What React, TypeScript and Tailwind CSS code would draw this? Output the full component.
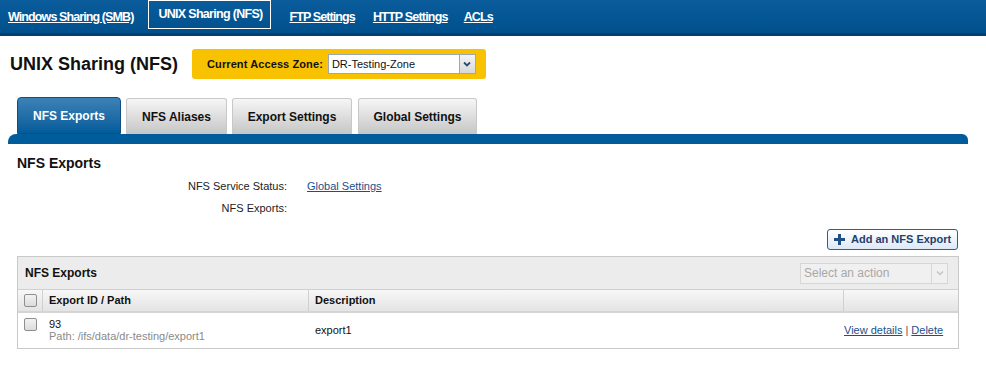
import React from "react";

const font = { fontFamily: '"Liberation Sans", Arial, sans-serif' };

function Checkbox() {
  return (
    <div className="w-[13px] h-[13px] border border-[#8f8f8f] bg-gradient-to-b from-[#f2f2f2] to-[#dcdcdc] rounded-[2px]" />
  );
}

export default function App() {
  return (
    <div style={font} className="w-[986px] h-[374px] bg-white text-[#000] overflow-hidden">
      {/* Top nav */}
      <div className="h-[36px] bg-gradient-to-b from-[#0b5c9c] to-[#00508c] border-b-[3px] border-[#003f70] flex items-start pl-[8px]">
        <a className="mt-[8px] text-white text-[12.5px] font-bold underline tracking-[-0.9px]">Windows Sharing (SMB)</a>
        <div className="ml-[15px] h-[29px] border border-white pl-[9px] pr-[7px] flex items-center">
          <span className="text-white text-[12.5px] font-bold tracking-[-0.7px]">UNIX Sharing (NFS)</span>
        </div>
        <a className="ml-[19px] mt-[8px] text-white text-[12.5px] font-bold underline tracking-[-0.9px]">FTP Settings</a>
        <a className="ml-[18px] mt-[8px] text-white text-[12.5px] font-bold underline tracking-[-0.8px]">HTTP Settings</a>
        <a className="ml-[16px] mt-[8px] text-white text-[12.5px] font-bold underline tracking-[-0.9px]">ACLs</a>
      </div>

      {/* Title row */}
      <div className="flex items-center mt-[13px] pl-[10px]">
        <h1 className="text-[18px] font-bold text-[#111] leading-none">UNIX Sharing (NFS)</h1>
        <div className="ml-[14px] w-[294px] h-[30px] bg-[#f8c200] rounded-[3px] flex items-center pl-[15px]">
          <span className="text-[11px] font-bold text-[#111] tracking-[0.1px]">Current Access Zone:</span>
          <div className="ml-[5px] w-[148px] h-[20px] bg-white border border-[#9aa7b5] flex items-center">
            <span className="flex-1 pl-[3px] text-[11px] text-[#111]">DR-Testing-Zone</span>
            <div className="w-[16px] h-full border-l border-[#9aa7b5] bg-gradient-to-b from-[#f4f4f4] to-[#d8d8d8] flex items-center justify-center">
              <svg width="8" height="6" viewBox="0 0 8 6"><path d="M1 1.5 L4 4.5 L7 1.5" stroke="#2a4a7a" strokeWidth="1.8" fill="none" /></svg>
            </div>
          </div>
        </div>
      </div>

      {/* Tabs */}
      <div className="mt-[18px] pl-[17px] flex items-end h-[37px]">
        <div className="w-[104px] h-[37px] rounded-t-[4px] border border-[#0d4f85] bg-gradient-to-b from-[#3b82b6] to-[#005c9a] flex items-center justify-center">
          <span className="text-white text-[12px] font-bold">NFS Exports</span>
        </div>
        <div className="ml-[5px] w-[101px] h-[36px] rounded-t-[3px] border border-[#c8c8c8] border-b-0 bg-gradient-to-b from-[#f6f6f6] to-[#c6c6c6] flex items-center justify-center">
          <span className="text-[#111] text-[12px] font-bold">NFS Aliases</span>
        </div>
        <div className="ml-[5px] w-[120px] h-[36px] rounded-t-[3px] border border-[#c8c8c8] border-b-0 bg-gradient-to-b from-[#f6f6f6] to-[#c6c6c6] flex items-center justify-center">
          <span className="text-[#111] text-[12px] font-bold">Export Settings</span>
        </div>
        <div className="ml-[6px] w-[119px] h-[36px] rounded-t-[3px] border border-[#c8c8c8] border-b-0 bg-gradient-to-b from-[#f6f6f6] to-[#c6c6c6] flex items-center justify-center">
          <span className="text-[#111] text-[12px] font-bold">Global Settings</span>
        </div>
      </div>
      <div className="ml-[8px] w-[960px] h-[10px] bg-[#005c9a] rounded-tl-[8px] rounded-tr-[6px]" />

      {/* Section */}
      <div className="pl-[17px] mt-[10px]">
        <h2 className="text-[14px] font-bold text-[#111] leading-[18px]">NFS Exports</h2>
        <div className="mt-[7px] grid grid-cols-[270px_1fr] gap-x-[20px] gap-y-[8px] text-[11px] text-[#222] leading-[14px]">
          <span className="text-right">NFS Service Status:</span>
          <a className="underline text-[#1b4f8c]">Global Settings</a>
          <span className="text-right">NFS Exports:</span>
          <span />
        </div>
      </div>

      {/* Add button */}
      <div className="flex justify-end pr-[28px] mt-[14px]">
        <div className="w-[131px] h-[21px] pl-[6px] rounded-[3px] border border-[#2a5f9a] bg-gradient-to-b from-[#ffffff] to-[#dde9f6] flex items-center gap-[6px]">
          <svg width="11" height="11" viewBox="0 0 11 11"><path d="M4 0h3v4h4v3H7v4H4V7H0V4h4z" fill="#1f4f86" /></svg>
          <span className="text-[11px] font-bold text-[#1f3f6a]">Add an NFS Export</span>
        </div>
      </div>

      {/* Table panel */}
      <div className="ml-[17px] mt-[6px] w-[942px] border border-[#c9c9c9]">
        <div className="h-[32px] bg-[#ececec] flex items-center pl-[7px] pr-[10px]">
          <span className="text-[12px] font-bold text-[#111]">NFS Exports</span>
          <div className="ml-auto w-[148px] h-[21px] border border-[#d6d6d6] bg-[#f0f0f0] flex items-center">
            <span className="flex-1 pl-[3px] text-[12px] text-[#a8a8a8]">Select an action</span>
            <div className="w-[16px] h-full border-l border-[#d6d6d6] flex items-center justify-center">
              <svg width="8" height="6" viewBox="0 0 8 6"><path d="M1 1.5 L4 4.5 L7 1.5" stroke="#c4c4c4" strokeWidth="1.4" fill="none" /></svg>
            </div>
          </div>
        </div>
        <div className="grid grid-cols-[25px_266px_535px_1fr] h-[24px] bg-gradient-to-b from-[#f7f7f7] to-[#e4e4e4] border-t border-[#d0d0d0] border-b-2 border-b-[#d4d4d4] text-[11px] font-bold text-[#111]">
          <div className="border-r border-[#d0d0d0] flex items-center justify-center"><Checkbox /></div>
          <div className="border-r border-[#d0d0d0] flex items-center pl-[6px]">Export ID / Path</div>
          <div className="border-r border-[#d0d0d0] flex items-center pl-[6px]">Description</div>
          <div />
        </div>
        <div className="grid grid-cols-[25px_266px_535px_1fr] h-[35px] bg-white text-[11px]">
          <div className="flex justify-center pt-[5px]"><Checkbox /></div>
          <div className="pl-[6px] pt-[5px] leading-[12px]">
            <div className="text-[#111]">93</div>
            <div className="text-[#8a8a8a]">Path: /ifs/data/dr-testing/export1</div>
          </div>
          <div className="pl-[6px] flex items-center text-[#111]">export1</div>
          <div className="flex items-center justify-end pr-[15px] text-[#1b4f8c] whitespace-nowrap">
            <a className="underline">View details</a>
            <span className="mx-[3px] text-[#555]">|</span>
            <a className="underline">Delete</a>
          </div>
        </div>
      </div>
    </div>
  );
}
